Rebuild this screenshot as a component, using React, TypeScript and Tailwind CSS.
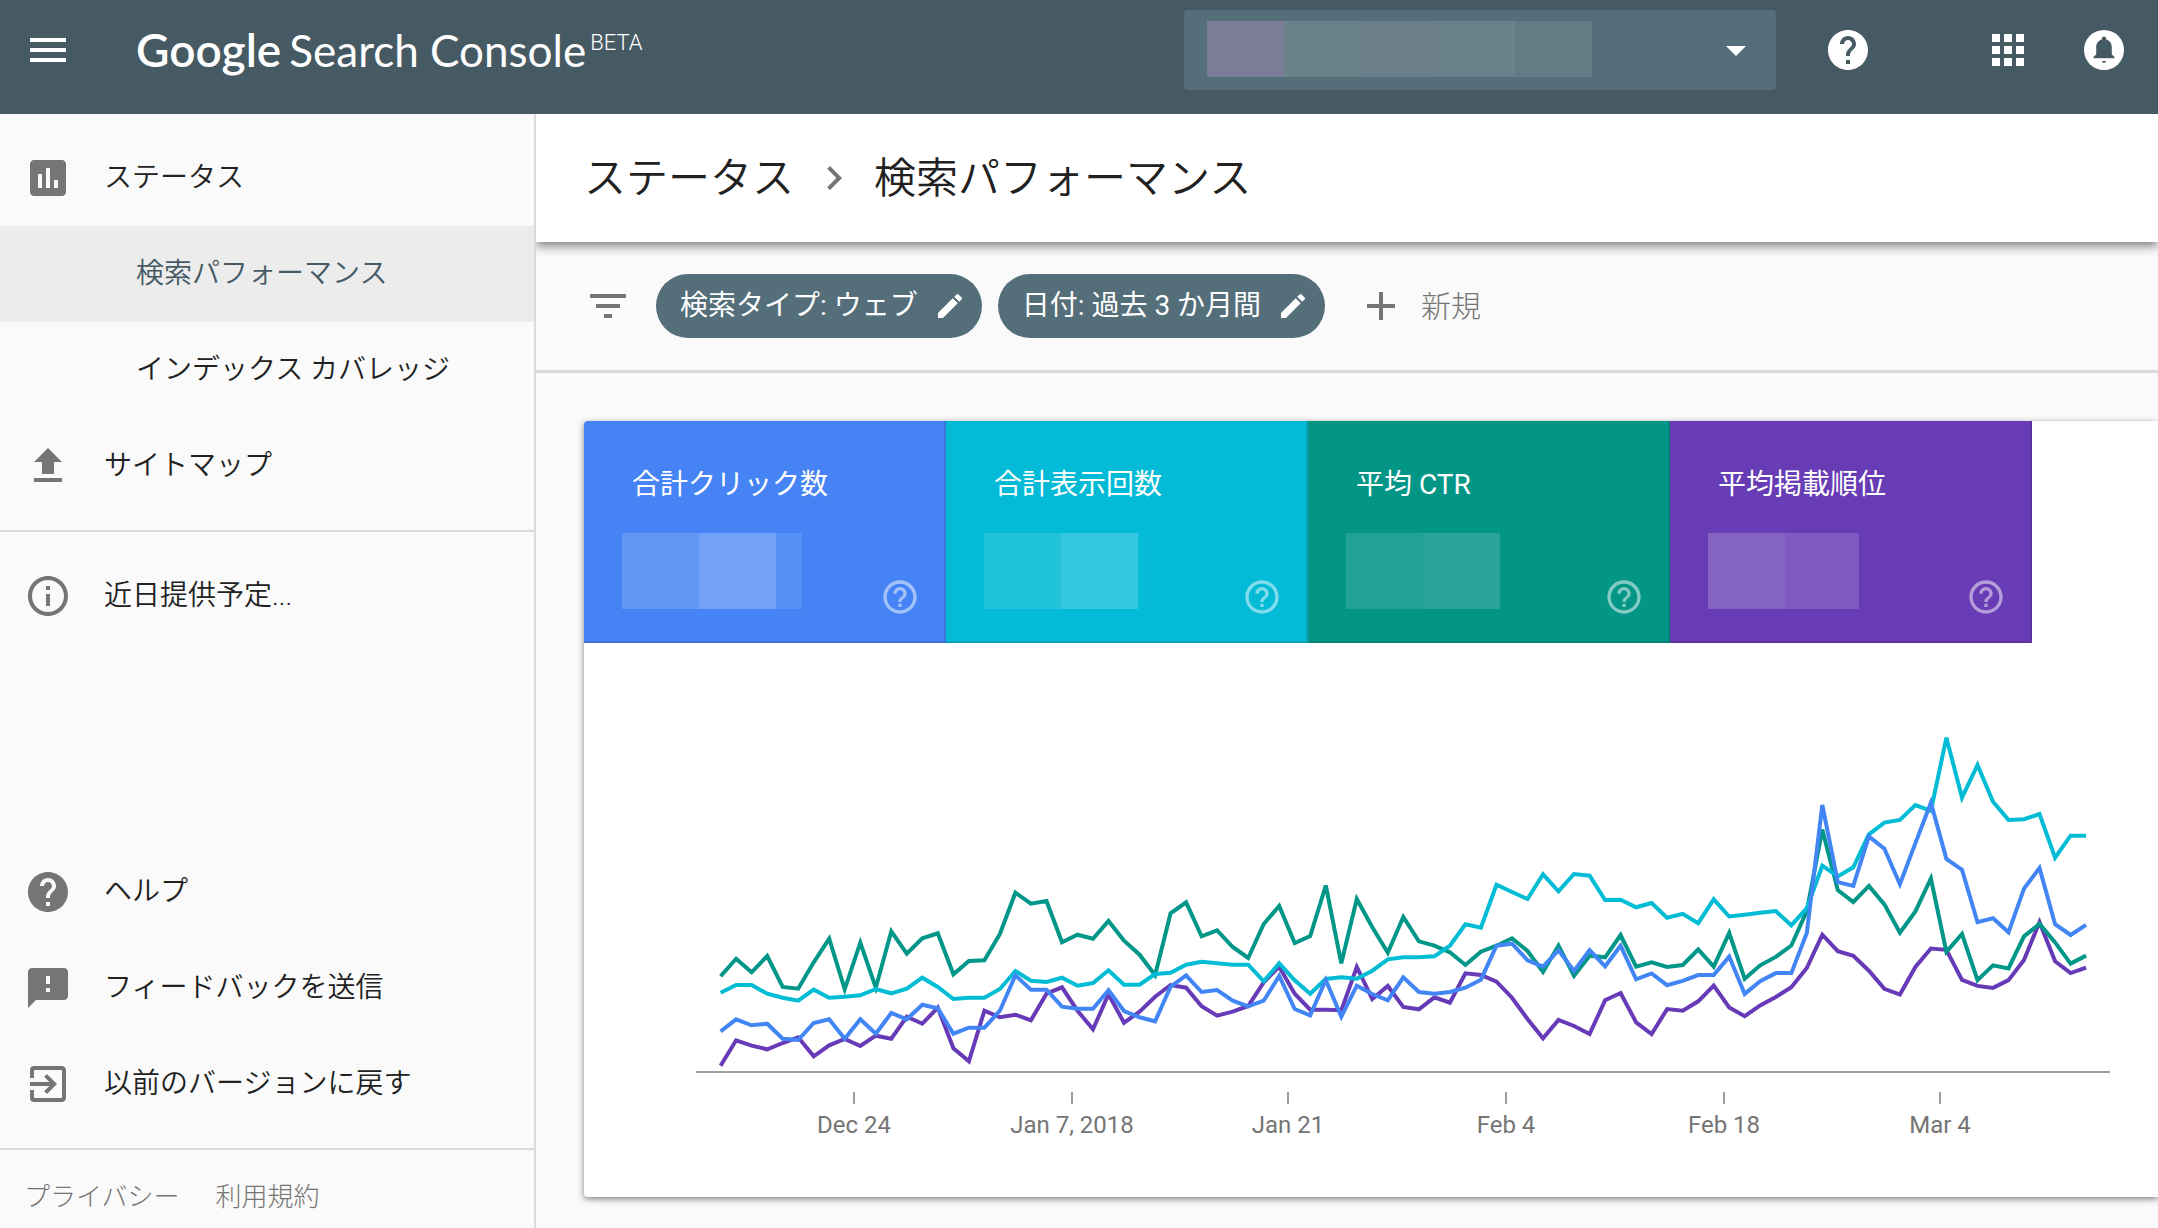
import React from 'react';
import {
  MdAdd,
  MdApps,
  MdArrowDropDown,
  MdAssessment,
  MdChevronRight,
  MdEdit,
  MdExitToApp,
  MdFeedback,
  MdFileUpload,
  MdFilterList,
  MdHelp,
  MdHelpOutline,
  MdInfoOutline,
  MdMenu,
} from 'react-icons/md';
import type { IconType } from 'react-icons';
import { clsx } from 'clsx';

interface NavItemProps {
  label: string;
  icon?: IconType;
  active?: boolean;
}

interface Metric {
  label: string;
  tile: string;
  blocks: string[];
}

interface Series {
  name: string;
  color: string;
  values: number[];
}

const METRICS: Metric[] = [
  {
    label: '合計クリック数',
    tile: 'bg-[#4684f5] border-[#3d74d7] rounded-tl',
    blocks: ['w-[77px] bg-white/16', 'w-[77px] bg-white/24', 'w-[26px] bg-white/9'],
  },
  {
    label: '合計表示回数',
    tile: 'bg-[#03bbd6] border-[#03a4bc]',
    blocks: ['w-[77px] bg-white/12', 'w-[77px] bg-white/20', 'w-[18px] bg-white/1'],
  },
  {
    label: '平均 CTR',
    tile: 'bg-[#039686] border-[#038375]',
    blocks: ['w-[77px] bg-white/12', 'w-[77px] bg-white/15'],
  },
  {
    label: '平均掲載順位',
    tile: 'bg-[#673cb4] border-[#5a349e]',
    blocks: ['w-[77px] bg-white/20', 'w-[74px] bg-white/16'],
  },
];

// Later series are painted over the earlier ones
const SERIES: Series[] = [
  {
    name: 'position',
    color: '#673ab7',
    values: [
      6.3, 31.7, 26.3, 22.7, 29, 34.7, 15.7, 26.7, 33, 26, 36.3, 33.3, 55.3, 48.3, 64.3, 23.7, 10.7, 61.3, 54.7, 57.3,
      51.7, 78.3, 84.7, 61.3, 42.7, 77.7, 49.3, 60.3, 75.3, 87, 84.3, 65.7, 56.3, 60.3, 66, 89.7, 105.3, 78.3, 62.3, 62.3,
      61.7, 105, 73, 86, 65, 62.7, 74.7, 69.3, 98.7, 97, 90.3, 74.3, 53, 33.7, 52, 46, 38, 71.7, 79, 49.7,
      38, 62.9, 61.2, 70.7, 86.5, 64.6, 55.8, 66.6, 75, 84.8, 104, 137.3, 120.8, 116.1, 101.3, 83.1, 77.4, 105, 123.5,
      122.2, 92.2, 86.1, 84.1, 91.9, 112.1, 149.8, 110.7, 98.9, 104.3,
    ],
  },
  {
    name: 'ctr',
    color: '#009688',
    values: [
      95.7, 113.3, 99.7, 116, 85, 83.3, 109.7, 133.3, 82.7, 129.3, 84.3, 140.7, 118.3, 133.7, 138.7, 97.7, 111, 111.7, 138,
      179.3, 168.3, 171, 129.7, 137.3, 133.3, 151, 131.3, 117.3, 96.7, 158.7, 169.7, 135.7, 141.7, 125, 114, 148, 166, 129,
      136, 186.5, 108.7, 173, 144.7, 119.3, 155, 130.7, 126.3, 119.7, 107, 120.3, 126.3, 133.7, 121, 100, 126.3, 96.3,
      116.3, 114.7, 137, 105.3, 109.7, 105, 107, 122.5, 105.3, 139, 93.2, 106.7, 115.1, 126.5, 160.9, 242.4, 181.8, 170,
      186.1, 167.6, 139.3, 160.6, 193.5, 120.1, 138, 91.9, 106.7, 103.6, 135.6, 148.1, 129.6, 108.4, 116.4,
    ],
  },
  {
    name: 'impressions',
    color: '#00bcd4',
    values: [
      79.3, 87, 87, 78.3, 74.3, 71.3, 82.3, 74.3, 75.3, 76.7, 83, 78.7, 83.3, 94.3, 85, 73, 74.3, 74.3, 83, 101, 91.3, 90,
      94.3, 86.3, 89, 101.7, 87.3, 87.3, 98, 99.3, 107.3, 110.3, 108.7, 107.3, 107.3, 90.7, 108.7, 91.7, 78.3, 93, 94.7,
      93.3, 101.3, 112.7, 114.7, 114.7, 115.7, 126.3, 147.7, 144.3, 187.3, 180, 173, 197.7, 180.7, 198, 196.3, 172, 172.3,
      164.7, 169, 154.2, 158.2, 148.8, 172.7, 155.5, 157.2, 159.2, 160.9, 146.7, 163.9, 206.3, 195.6, 204.7, 237.7, 249.4,
      252.1, 266.9, 261.2, 334.3, 274.4, 307, 270.3, 252.1, 252.8, 257.9, 214.4, 236.3, 236.3,
    ],
  },
  {
    name: 'clicks',
    color: '#4285f4',
    values: [
      40.7, 52.7, 46.7, 48.3, 33.3, 32, 49, 52.7, 33.3, 52.7, 38.3, 59, 52.7, 67.3, 63.7, 38.3, 44.3, 44.3, 61.3, 96.7,
      82.3, 82.3, 65.3, 63.3, 63.3, 81.7, 61, 54.7, 50.7, 85.3, 96.7, 80, 82, 71.3, 65.7, 71.3, 96, 63, 56.7, 92, 55.3,
      86.3, 78, 71.7, 94.7, 80, 78.3, 80, 84.3, 92.3, 126.3, 128.3, 111.7, 105.3, 121.7, 101, 122, 105.7, 126.3, 92.7,
      98.6, 86.8, 91.2, 96.9, 96.9, 115.4, 78.1, 90.9, 98.9, 98.9, 139, 267, 189.8, 186.1, 235.6, 223.2, 187.8, 228.9,
      269.3, 213.1, 202.3, 149.8, 153.8, 139.7, 183.4, 204, 147.8, 137, 147.1,
    ],
  },
];

const TICKS = [
  { x: 270, label: 'Dec 24' },
  { x: 488, label: 'Jan 7, 2018' },
  { x: 704, label: 'Jan 21' },
  { x: 922, label: 'Feb 4' },
  { x: 1140, label: 'Feb 18' },
  { x: 1356, label: 'Mar 4' },
];

const CHART_LEFT = 136.6;
const CHART_STEP = 15.517;
const AXIS_Y = 429;

const toPoints = (values: number[]) =>
  values.map((v, i) => `${(CHART_LEFT + i * CHART_STEP).toFixed(1)},${(AXIS_Y - v).toFixed(1)}`).join(' ');

const NavItem: React.FC<NavItemProps> = ({ label, icon: Icon, active = false }) => (
  <a
    href="#"
    className={clsx(
      'flex h-24 items-center gap-8 text-[28px] font-[350]',
      Icon ? 'pl-6' : 'pl-34',
      active ? 'bg-[#ececec] text-[#455a64]' : 'text-[#212121]'
    )}
  >
    {Icon && <Icon className="size-12 shrink-0 text-[#757575]" />}
    <span>{label}</span>
  </a>
);

const NotificationIcon: React.FC = () => (
  <svg viewBox="0 0 24 24" className="size-12">
    <circle cx="12" cy="12" r="10" fill="#fff" />
    <path
      d="M12 18.4c.55 0 1-.4 1-.9h-2c0 .5.45.9 1 .9zM17.2 16.1H6.8v-.7l1.3-1.2v-3.5c0-2 1.1-3.6 2.9-4.1v-.4c0-.6.4-1 1-1s1 .4 1 1v.4c1.8.5 2.9 2.1 2.9 4.1v3.5l1.3 1.2z"
      fill="#465a64"
    />
  </svg>
);

const Header: React.FC = () => (
  <header className="flex h-[114px] items-center bg-[#465a64] pr-[30px] pb-[14px] pl-6 text-white">
    <button type="button" aria-label="メニュー">
      <MdMenu className="size-12" />
    </button>
    <div className="ml-16 flex items-start whitespace-nowrap font-['Lato',sans-serif] text-[44px] leading-[60px]">
      <span className="text-[46px] font-semibold">Google</span>
      <span className="ml-2">Search Console</span>
      <span className="ml-1 font-['Roboto',sans-serif] text-[22px] leading-[46px] font-light">BETA</span>
    </div>

    <div className="relative ml-auto h-20 w-[592px] rounded bg-[#546e7a]">
      <select aria-label="プロパティ" className="size-full appearance-none rounded bg-transparent" />
      <div className="pointer-events-none absolute top-[11px] left-[23px] flex h-14">
        <div className="w-[77px] bg-[#7b7d98]" />
        <div className="w-[77px] bg-[#6c828b]" />
        <div className="w-[77px] bg-[#6a7f89]" />
        <div className="w-[77px] bg-[#6b818b]" />
        <div className="w-[77px] bg-[#647a84]" />
      </div>
      <MdArrowDropDown className="pointer-events-none absolute top-4 right-4 size-12" />
    </div>

    <button type="button" aria-label="ヘルプ" className="ml-12">
      <MdHelp className="size-12" />
    </button>
    <button type="button" aria-label="アプリ" className="ml-28">
      <MdApps className="size-12" />
    </button>
    <button type="button" aria-label="通知" className="ml-12">
      <NotificationIcon />
    </button>
  </header>
);

const Sidebar: React.FC = () => (
  <aside className="flex w-[536px] shrink-0 flex-col border-r-2 border-[#dadada]">
    <nav className="border-b-2 border-[#dadada] py-4">
      <NavItem label="ステータス" icon={MdAssessment} />
      <NavItem label="検索パフォーマンス" active />
      <NavItem label="インデックス カバレッジ" />
      <NavItem label="サイトマップ" icon={MdFileUpload} />
    </nav>
    <nav className="py-4">
      <NavItem label="近日提供予定..." icon={MdInfoOutline} />
    </nav>
    <nav className="mt-auto border-b-2 border-[#dadada] pb-4">
      <NavItem label="ヘルプ" icon={MdHelp} />
      <NavItem label="フィードバックを送信" icon={MdFeedback} />
      <NavItem label="以前のバージョンに戻す" icon={MdExitToApp} />
    </nav>
    <div className="flex h-[78px] items-center gap-9 pt-4 pl-6 text-[26px] font-light text-[#757575]">
      <a href="#">プライバシー</a>
      <a href="#">利用規約</a>
    </div>
  </aside>
);

const FilterChip: React.FC<{ label: string }> = ({ label }) => (
  <button type="button" className="flex h-16 items-center gap-4 rounded-full bg-[#546e7a] pr-4 pl-6 text-[28px] text-white">
    <span>{label}</span>
    <MdEdit className="size-8" />
  </button>
);

const MetricTile: React.FC<{ metric: Metric }> = ({ metric }) => (
  <button
    type="button"
    className={clsx('relative flex h-[222px] w-[362px] flex-col items-start border-r-2 border-b-2 pt-11 text-white', metric.tile)}
  >
    <span className="pl-12 text-[28px] leading-10">{metric.label}</span>
    <span className="mt-7 ml-[38px] flex h-[76px]">
      {metric.blocks.map((block, i) => (
        <span key={i} className={block} />
      ))}
    </span>
    <MdHelpOutline className="absolute right-6 bottom-6 size-10 text-white/50" />
  </button>
);

const PerformanceChart: React.FC = () => (
  <svg viewBox="0 0 1574 554" className="block w-full" role="img" aria-label="検索パフォーマンス">
    {SERIES.map((s) => (
      <polyline key={s.name} points={toPoints(s.values)} fill="none" stroke={s.color} strokeWidth="4" />
    ))}
    <line x1="112" x2="1526" y1={AXIS_Y} y2={AXIS_Y} stroke="#9e9e9e" strokeWidth="2" />
    {TICKS.map(({ x, label }) => (
      <g key={label}>
        <line x1={x} x2={x} y1="449" y2="461" stroke="#9e9e9e" strokeWidth="2" />
        <text x={x} y="490" textAnchor="middle" fill="#757575" className="font-['Roboto',sans-serif] text-[24px]">
          {label}
        </text>
      </g>
    ))}
  </svg>
);

export default function App() {
  return (
    <div className="flex min-h-screen flex-col bg-[#fafafa] font-['Roboto','Noto_Sans_CJK_JP',sans-serif] text-[#212121]">
      <Header />
      <div className="flex flex-1">
        <Sidebar />
        <main className="min-w-0 flex-1 overflow-hidden">
          <div className="relative flex h-32 items-center gap-4 bg-white pl-12 text-[42px] font-[350] shadow-[0_4px_10px_rgba(0,0,0,0.5)]">
            <a href="#">ステータス</a>
            <MdChevronRight className="size-12 text-[#757575]" />
            <h1>検索パフォーマンス</h1>
          </div>

          <div className="flex h-[131px] items-center border-b-3 border-[#dadada] pl-12">
            <MdFilterList className="mr-6 size-12 text-[#757575]" />
            <div className="flex gap-4">
              <FilterChip label="検索タイプ: ウェブ" />
              <FilterChip label="日付: 過去 3 か月間" />
            </div>
            <button type="button" className="ml-8 flex items-center gap-4 text-[30px] font-light text-[#757575]">
              <MdAdd className="size-12" />
              <span>新規</span>
            </button>
          </div>

          <section className="mt-12 ml-12 rounded-l bg-white shadow-[0_2px_6px_rgba(0,0,0,0.5)]">
            <div className="flex">
              {METRICS.map((metric) => (
                <MetricTile key={metric.label} metric={metric} />
              ))}
            </div>
            <PerformanceChart />
          </section>
        </main>
      </div>
    </div>
  );
}
